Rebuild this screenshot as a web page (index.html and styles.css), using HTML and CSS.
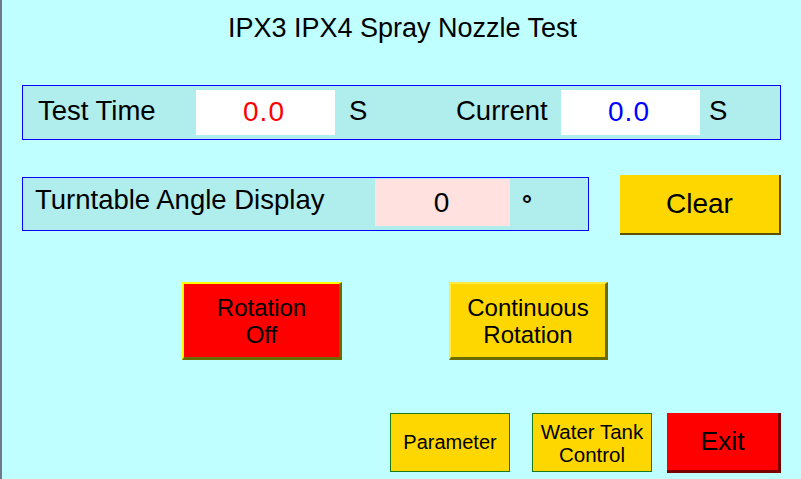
FILE: index.html
```html
<!DOCTYPE html>
<html lang="en">
<head>
<meta charset="utf-8">
<title>IPX3 IPX4 Spray Nozzle Test</title>
<link rel="stylesheet" href="styles.css">
</head>
<body>
<div class="screen">
  <h1 class="title">IPX3 IPX4 Spray Nozzle Test</h1>

  <div class="panel panel-time">
    <span class="label label-test">Test Time</span>
    <span class="value value-red">0.0</span>
    <span class="unit unit-first">S</span>
    <span class="label label-current">Current</span>
    <span class="value value-blue">0.0</span>
    <span class="unit unit-second">S</span>
  </div>

  <div class="row row-angle">
    <div class="panel panel-angle">
      <span class="label label-angle">Turntable Angle Display</span>
      <span class="value value-pink">0</span>
      <span class="unit unit-deg">°</span>
    </div>
    <button class="btn btn-clear">Clear</button>
  </div>

  <div class="row row-rotation">
    <button class="btn btn-bevel btn-red">Rotation<br>Off</button>
    <button class="btn btn-bevel btn-gold">Continuous<br>Rotation</button>
  </div>

  <div class="row row-bottom">
    <button class="btn btn-small">Parameter</button>
    <button class="btn btn-small btn-two">Water Tank<br>Control</button>
    <button class="btn btn-exit">Exit</button>
  </div>
</div>
</body>
</html>
```

FILE: styles.css
```css
* {
  box-sizing: border-box;
}

html, body {
  margin: 0;
  padding: 0;
}

body {
  width: 801px;
  height: 479px;
  overflow: hidden;
  background: #bfffff;
  border-left: 2px solid #6e7a8a;
  font-family: "Liberation Sans", Arial, sans-serif;
  color: #000;
}

.screen {
  padding: 13px 20px 0 20px;
}

.title {
  margin: 0;
  height: 30px;
  line-height: 30px;
  font-size: 27px;
  font-weight: normal;
  text-align: center;
  padding-left: 2px;
}

.panel {
  display: flex;
  align-items: flex-start;
  background: #b0eded;
  border: 1px solid #0000ff;
}

.panel-time {
  margin-top: 42px;
  height: 55px;
  padding-top: 4px;
}

.label,
.unit {
  font-size: 27.5px;
  line-height: 42px;
  white-space: nowrap;
}

.label-test {
  width: 173px;
  padding-left: 15px;
}

.value {
  font-size: 28px;
  letter-spacing: 1px;
  text-align: center;
  flex: none;
}

.panel-time .value {
  width: 139px;
  height: 45px;
  line-height: 43px;
  background: #ffffff;
  padding-right: 3px;
}

.value-red {
  color: #ff0000;
}

.value-blue {
  color: #0000ff;
}

.unit-first {
  width: 121px;
  padding-left: 14px;
}

.label-current {
  width: 105px;
}

.unit-second {
  padding-left: 9px;
}

.row {
  display: flex;
  align-items: flex-start;
}

.row-angle {
  margin-top: 35px;
}

.panel-angle {
  width: 567px;
  height: 54px;
  margin-top: 2px;
  padding-top: 1px;
}

.label-angle {
  width: 352px;
  padding-left: 12px;
  line-height: 41px;
  font-size: 27.5px;
}

.value-pink {
  width: 135px;
  height: 47px;
  line-height: 47px;
  background: #ffe1df;
  letter-spacing: 0;
  padding-right: 2px;
}

.unit-deg {
  padding-left: 12px;
  line-height: 51px;
  font-size: 25px;
  font-weight: bold;
}

.btn {
  margin: 0;
  padding: 0;
  font-family: "Liberation Sans", Arial, sans-serif;
  color: #000;
  text-align: center;
  cursor: pointer;
  border: none;
  flex: none;
}

.btn-clear {
  margin-left: auto;
  width: 161px;
  height: 60px;
  background: #ffd700;
  border-right: 2px solid #5c5000;
  border-bottom: 2px solid #5c5000;
  font-size: 28px;
}

.row-rotation {
  margin-top: 47px;
  padding-left: 160px;
  gap: 107px;
}

.btn-bevel {
  width: 160px;
  height: 78px;
  font-size: 24px;
  line-height: 27px;
  border-top: 2px solid #ffff00;
  border-left: 2px solid #ffff00;
  border-right: 3px solid #6b6b00;
  border-bottom: 3px solid #6b6b00;
}

.btn-red {
  background: #ff0000;
}

.btn-gold {
  width: 159px;
  background: #ffd700;
  border-top-color: #ffec40;
  border-left-color: #ffec40;
}

.row-bottom {
  margin-top: 53px;
  justify-content: flex-end;
}

.btn-small {
  width: 120px;
  height: 59px;
  background: #ffd700;
  border: 1px solid #1a7a1a;
  font-size: 20px;
  line-height: 23px;
  margin-right: 22px;
}

.btn-two {
  font-size: 20.5px;
  margin-right: 15px;
}

.btn-exit {
  width: 114px;
  height: 60px;
  background: #ff0000;
  border-right: 3px solid #7a0000;
  border-bottom: 3px solid #7a0000;
  font-size: 26.5px;
}
```
